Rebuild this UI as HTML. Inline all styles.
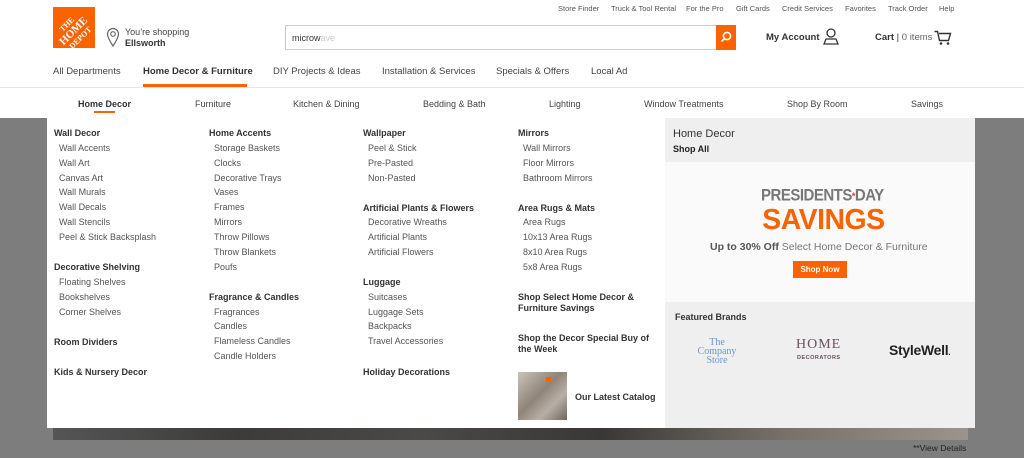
<!DOCTYPE html>
<html><head><meta charset="utf-8">
<style>
*{margin:0;padding:0;box-sizing:border-box}
body{width:1024px;height:458px;overflow:hidden;background:#fff;font-family:"Liberation Sans",Arial,sans-serif;position:relative;color:#333}
.a{position:absolute;white-space:nowrap;line-height:12px}
.top{font-size:7.5px;color:#555}
.nav{font-size:9.5px;color:#444}
.sub{font-size:9px;color:#444}
.h{font-size:9px;font-weight:bold;color:#333}
.i{font-size:9px;color:#555}
</style></head><body>
<!-- logo -->
<div class="a" style="left:53px;top:7px;width:42px;height:41px;background:#f96302;overflow:hidden">
<div style="position:absolute;left:-4px;top:11px;width:50px;transform:rotate(-45deg);color:#fff;font-family:'Liberation Serif',serif;font-weight:bold;font-size:8px;text-align:center;line-height:8px">THE<br><span style="font-size:11px;line-height:11px">HOME</span><br>DEPOT</div></div>
<svg class="a" style="left:106px;top:27px" width="14" height="20" viewBox="0 0 14 20"><path d="M7 19C3 13 1.5 10 1.5 7a5.5 5.5 0 0 1 11 0c0 3-1.5 6-5.5 12z" fill="none" stroke="#666" stroke-width="1.2"/><circle cx="7" cy="7" r="2.3" fill="none" stroke="#666" stroke-width="1.1"/></svg>
<div class="a" style="left:125px;top:26px;font-size:9px;color:#444">You’re shopping</div>
<div class="a" style="left:125px;top:37px;font-size:9px;font-weight:bold;color:#333">Ellsworth</div>
<!-- top links -->
<div class="a top" style="left:558px;top:3px">Store Finder</div>
<div class="a top" style="left:611px;top:3px">Truck &amp; Tool Rental</div>
<div class="a top" style="left:686px;top:3px">For the Pro</div>
<div class="a top" style="left:736px;top:3px">Gift Cards</div>
<div class="a top" style="left:782px;top:3px">Credit Services</div>
<div class="a top" style="left:845px;top:3px">Favorites</div>
<div class="a top" style="left:888px;top:3px">Track Order</div>
<div class="a top" style="left:939px;top:3px">Help</div>
<!-- search -->
<div class="a" style="left:285px;top:25px;width:431px;height:25px;border:1px solid #ccc;border-right:none"></div>
<div class="a" style="left:292px;top:32px;font-size:9px;color:#333">microw<span style="color:#ccc">ave</span></div>
<div class="a" style="left:716px;top:25px;width:20px;height:25px;background:#f96302"></div>
<svg class="a" style="left:719px;top:30px" width="14" height="14" viewBox="0 0 14 14"><circle cx="8" cy="6" r="3.6" fill="none" stroke="#fff" stroke-width="1.6"/><path d="M5.5 8.5L2.5 11.5" stroke="#fff" stroke-width="1.8"/></svg>
<div class="a" style="left:766px;top:32px;font-size:9.5px;font-weight:bold">My Account</div>
<svg class="a" style="left:823px;top:28px" width="16" height="17" viewBox="0 0 16 17"><circle cx="8" cy="5" r="4" fill="none" stroke="#333" stroke-width="1.3"/><path d="M1 16l2-5h10l2 5z" fill="none" stroke="#333" stroke-width="1.3"/></svg>
<div class="a" style="left:875px;top:32px;font-size:9.5px"><b>Cart</b> | <span style="color:#666">0 items</span></div>
<svg class="a" style="left:934px;top:30px" width="18" height="16" viewBox="0 0 18 16"><path d="M0.5 1.5h3l2 9h9l2-7H5" fill="none" stroke="#333" stroke-width="1.4"/><circle cx="7" cy="13.5" r="1.3" fill="#333"/><circle cx="14" cy="13.5" r="1.3" fill="#333"/></svg>
<!-- nav -->
<div class="a nav" style="left:53px;top:66px">All Departments</div>
<div class="a nav" style="left:143px;top:66px;font-weight:bold;color:#333">Home Decor &amp; Furniture</div>
<div class="a" style="left:143px;top:84px;width:104px;height:3px;background:#f96302"></div>
<div class="a nav" style="left:273px;top:66px">DIY Projects &amp; Ideas</div>
<div class="a nav" style="left:382px;top:66px">Installation &amp; Services</div>
<div class="a nav" style="left:496px;top:66px">Specials &amp; Offers</div>
<div class="a nav" style="left:591px;top:66px">Local Ad</div>
<div class="a" style="left:0;top:87px;width:1024px;height:1px;background:#e6e6e6"></div>
<div class="a sub" style="left:78px;top:98px;font-weight:bold;color:#333">Home Decor</div>
<div class="a" style="left:94px;top:111px;width:21px;height:2px;background:#f96302"></div>
<div class="a sub" style="left:195px;top:98px">Furniture</div>
<div class="a sub" style="left:293px;top:98px">Kitchen &amp; Dining</div>
<div class="a sub" style="left:423px;top:98px">Bedding &amp; Bath</div>
<div class="a sub" style="left:549px;top:98px">Lighting</div>
<div class="a sub" style="left:644px;top:98px">Window Treatments</div>
<div class="a sub" style="left:787px;top:98px">Shop By Room</div>
<div class="a sub" style="left:911px;top:98px">Savings</div>
<!-- overlay -->
<div class="a" style="left:0;top:118px;width:1024px;height:340px;background:#7d7d7d"></div>
<div class="a" style="left:53px;top:428px;width:915px;height:12px;background:linear-gradient(90deg,#555 0%,#3c3b3a 20%,#4a4948 40%,#3a3836 60%,#77716a 80%,#9a948c 100%)"></div>
<div class="a" style="left:913px;top:442px;font-size:8.5px;color:#222">**View Details</div>
<div class="a" style="left:47px;top:118px;width:928px;height:310px;background:#fff"></div>
<div class="a" style="left:665px;top:118px;width:310px;height:310px;background:#efefef"></div>
<div class="a" style="left:665px;top:162px;width:310px;height:140px;background:#fafafa"></div>
<!-- col 1 -->
<div class="a h" style="left:54px;top:127px">Wall Decor</div>
<div class="a i" style="left:59px;top:142px">Wall Accents</div>
<div class="a i" style="left:59px;top:157px">Wall Art</div>
<div class="a i" style="left:59px;top:172px">Canvas Art</div>
<div class="a i" style="left:59px;top:186px">Wall Murals</div>
<div class="a i" style="left:59px;top:201px">Wall Decals</div>
<div class="a i" style="left:59px;top:216px">Wall Stencils</div>
<div class="a i" style="left:59px;top:231px">Peel &amp; Stick Backsplash</div>
<div class="a h" style="left:54px;top:261px">Decorative Shelving</div>
<div class="a i" style="left:59px;top:276px">Floating Shelves</div>
<div class="a i" style="left:59px;top:291px">Bookshelves</div>
<div class="a i" style="left:59px;top:306px">Corner Shelves</div>
<div class="a h" style="left:54px;top:336px">Room Dividers</div>
<div class="a h" style="left:54px;top:366px">Kids &amp; Nursery Decor</div>
<!-- col 2 -->
<div class="a h" style="left:209px;top:127px">Home Accents</div>
<div class="a i" style="left:214px;top:142px">Storage Baskets</div>
<div class="a i" style="left:214px;top:157px">Clocks</div>
<div class="a i" style="left:214px;top:172px">Decorative Trays</div>
<div class="a i" style="left:214px;top:186px">Vases</div>
<div class="a i" style="left:214px;top:201px">Frames</div>
<div class="a i" style="left:214px;top:216px">Mirrors</div>
<div class="a i" style="left:214px;top:231px">Throw Pillows</div>
<div class="a i" style="left:214px;top:246px">Throw Blankets</div>
<div class="a i" style="left:214px;top:261px">Poufs</div>
<div class="a h" style="left:209px;top:291px">Fragrance &amp; Candles</div>
<div class="a i" style="left:214px;top:306px">Fragrances</div>
<div class="a i" style="left:214px;top:320px">Candles</div>
<div class="a i" style="left:214px;top:335px">Flameless Candles</div>
<div class="a i" style="left:214px;top:350px">Candle Holders</div>
<!-- col 3 -->
<div class="a h" style="left:363px;top:127px">Wallpaper</div>
<div class="a i" style="left:368px;top:142px">Peel &amp; Stick</div>
<div class="a i" style="left:368px;top:157px">Pre-Pasted</div>
<div class="a i" style="left:368px;top:172px">Non-Pasted</div>
<div class="a h" style="left:363px;top:202px">Artificial Plants &amp; Flowers</div>
<div class="a i" style="left:368px;top:216px">Decorative Wreaths</div>
<div class="a i" style="left:368px;top:231px">Artificial Plants</div>
<div class="a i" style="left:368px;top:246px">Artificial Flowers</div>
<div class="a h" style="left:363px;top:276px">Luggage</div>
<div class="a i" style="left:368px;top:291px">Suitcases</div>
<div class="a i" style="left:368px;top:306px">Luggage Sets</div>
<div class="a i" style="left:368px;top:320px">Backpacks</div>
<div class="a i" style="left:368px;top:335px">Travel Accessories</div>
<div class="a h" style="left:363px;top:366px">Holiday Decorations</div>
<!-- col 4 -->
<div class="a h" style="left:518px;top:127px">Mirrors</div>
<div class="a i" style="left:523px;top:142px">Wall Mirrors</div>
<div class="a i" style="left:523px;top:157px">Floor Mirrors</div>
<div class="a i" style="left:523px;top:172px">Bathroom Mirrors</div>
<div class="a h" style="left:518px;top:202px">Area Rugs &amp; Mats</div>
<div class="a i" style="left:523px;top:216px">Area Rugs</div>
<div class="a i" style="left:523px;top:231px">10x13 Area Rugs</div>
<div class="a i" style="left:523px;top:246px">8x10 Area Rugs</div>
<div class="a i" style="left:523px;top:261px">5x8 Area Rugs</div>
<div class="a h" style="left:518px;top:292px;line-height:11px">Shop Select Home Decor &amp;<br>Furniture Savings</div>
<div class="a h" style="left:518px;top:333px;line-height:11px">Shop the Decor Special Buy of<br>the Week</div>
<div class="a" style="left:518px;top:372px;width:49px;height:48px;background:linear-gradient(135deg,#c9c4bc,#8f8478 45%,#b8b0a6 70%,#6f665c)"></div>
<div class="a" style="left:546px;top:377px;width:5px;height:5px;background:#f96302"></div>
<div class="a h" style="left:575px;top:391px">Our Latest Catalog</div>
<!-- right -->
<div class="a" style="left:673px;top:128px;font-size:11px;color:#333">Home Decor</div>
<div class="a" style="left:673px;top:143px;font-size:9px;font-weight:bold;color:#222">Shop All</div>
<div class="a" style="left:761px;top:190px;font-size:15px;font-weight:bold;color:#777;letter-spacing:-0.5px;transform:scaleY(1.1)">PRESIDENTS<span style="color:#e33;font-size:9px;vertical-align:top">*</span>DAY</div>
<div class="a" style="left:761px;top:205px;font-size:29px;line-height:30px;font-weight:bold;color:#f96302;letter-spacing:-0.5px;transform:scaleX(0.98)">SAVINGS</div>
<div class="a" style="left:710px;top:241px;font-size:10.5px;color:#777"><b style="color:#555">Up to 30% Off</b> Select Home Decor &amp; Furniture</div>
<div class="a" style="left:793px;top:261px;width:54px;height:17px;background:#f96302;color:#fff;font-size:8px;font-weight:bold;text-align:center;line-height:17px">Shop Now</div>
<div class="a" style="left:675px;top:311px;font-size:9px;font-weight:bold;color:#333">Featured Brands</div>
<div class="a" style="left:692px;top:338px;width:50px;text-align:center;font-family:'Liberation Serif',serif;font-size:10px;line-height:9px;color:#6f95c9">The<br>Company<br>Store</div>
<div class="a" style="left:796px;top:339px;font-family:'Liberation Serif',serif;font-size:14px;color:#6b4f5f;letter-spacing:1px">HOME</div>
<div class="a" style="left:797px;top:352px;font-size:5.5px;font-weight:bold;color:#6b4f5f;letter-spacing:0.5px">DECORATORS</div>
<div class="a" style="left:889px;top:344px;font-size:14px;font-weight:bold;color:#222;letter-spacing:-0.3px">StyleWell<span style="font-size:8px">.</span></div>
</body></html>
